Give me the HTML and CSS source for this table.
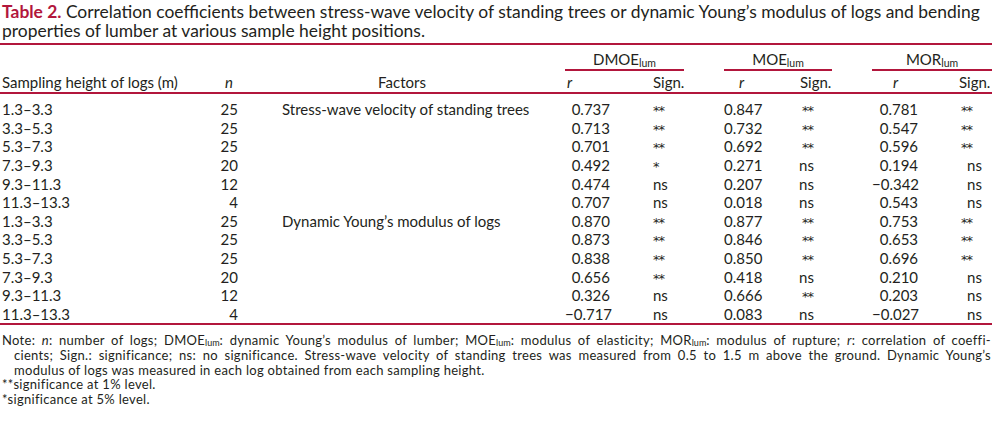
FILE: index.html
```html
<!DOCTYPE html>
<html lang="en">
<head>
<meta charset="utf-8">
<title>Table 2</title>
<link rel="stylesheet" href="styles.css">
</head>
<body>
<div class="page">
  <p class="caption"><span class="label">Table 2.</span> Correlation coefficients between stress-wave velocity of standing trees or dynamic Young’s modulus of logs and bending<br>properties of lumber at various sample height positions.</p>
  <table class="tbl">
    <colgroup>
      <col class="w-height"><col class="w-n"><col class="w-factor">
      <col class="w-r1"><col class="w-s1"><col class="w-gap">
      <col class="w-r2"><col class="w-s2"><col class="w-gap">
      <col class="w-r3"><col class="w-s3">
    </colgroup>
    <thead>
      <tr class="hrow1">
        <th></th><th></th><th></th>
        <th class="grp" colspan="2">DMOE<span class="sub">lum</span></th><th></th>
        <th class="grp" colspan="2">MOE<span class="sub">lum</span></th><th></th>
        <th class="grp" colspan="2">MOR<span class="sub">lum</span></th>
      </tr>
      <tr class="hrow2">
        <th class="c-height">Sampling height of logs (m)</th>
        <th class="c-n"><i>n</i></th>
        <th class="c-factor">Factors</th>
        <th class="hr1"><i>r</i></th><th class="hs1">Sign.</th><th></th>
        <th class="hr2"><i>r</i></th><th class="hs2">Sign.</th><th></th>
        <th class="hr3"><i>r</i></th><th class="hs3">Sign.</th>
      </tr>
    </thead>
    <tbody>
      <tr class="first"><td class="c-height">1.3–3.3</td><td class="c-n">25</td><td class="c-factor">Stress-wave velocity of standing trees</td><td class="r1">0.737</td><td class="s1 ast">**</td><td></td><td class="r2">0.847</td><td class="s2 ast">**</td><td></td><td class="r3">0.781</td><td class="s3 ast">**</td></tr>
      <tr><td class="c-height">3.3–5.3</td><td class="c-n">25</td><td class="c-factor"></td><td class="r1">0.713</td><td class="s1 ast">**</td><td></td><td class="r2">0.732</td><td class="s2 ast">**</td><td></td><td class="r3">0.547</td><td class="s3 ast">**</td></tr>
      <tr><td class="c-height">5.3–7.3</td><td class="c-n">25</td><td class="c-factor"></td><td class="r1">0.701</td><td class="s1 ast">**</td><td></td><td class="r2">0.692</td><td class="s2 ast">**</td><td></td><td class="r3">0.596</td><td class="s3 ast">**</td></tr>
      <tr><td class="c-height">7.3–9.3</td><td class="c-n">20</td><td class="c-factor"></td><td class="r1">0.492</td><td class="s1 ast">*</td><td></td><td class="r2">0.271</td><td class="s2 ns">ns</td><td></td><td class="r3">0.194</td><td class="s3 ns">ns</td></tr>
      <tr><td class="c-height">9.3–11.3</td><td class="c-n">12</td><td class="c-factor"></td><td class="r1">0.474</td><td class="s1 ns">ns</td><td></td><td class="r2">0.207</td><td class="s2 ns">ns</td><td></td><td class="r3">−0.342</td><td class="s3 ns">ns</td></tr>
      <tr><td class="c-height">11.3–13.3</td><td class="c-n">4</td><td class="c-factor"></td><td class="r1">0.707</td><td class="s1 ns">ns</td><td></td><td class="r2">0.018</td><td class="s2 ns">ns</td><td></td><td class="r3">0.543</td><td class="s3 ns">ns</td></tr>
      <tr><td class="c-height">1.3–3.3</td><td class="c-n">25</td><td class="c-factor">Dynamic Young’s modulus of logs</td><td class="r1">0.870</td><td class="s1 ast">**</td><td></td><td class="r2">0.877</td><td class="s2 ast">**</td><td></td><td class="r3">0.753</td><td class="s3 ast">**</td></tr>
      <tr><td class="c-height">3.3–5.3</td><td class="c-n">25</td><td class="c-factor"></td><td class="r1">0.873</td><td class="s1 ast">**</td><td></td><td class="r2">0.846</td><td class="s2 ast">**</td><td></td><td class="r3">0.653</td><td class="s3 ast">**</td></tr>
      <tr><td class="c-height">5.3–7.3</td><td class="c-n">25</td><td class="c-factor"></td><td class="r1">0.838</td><td class="s1 ast">**</td><td></td><td class="r2">0.850</td><td class="s2 ast">**</td><td></td><td class="r3">0.696</td><td class="s3 ast">**</td></tr>
      <tr><td class="c-height">7.3–9.3</td><td class="c-n">20</td><td class="c-factor"></td><td class="r1">0.656</td><td class="s1 ast">**</td><td></td><td class="r2">0.418</td><td class="s2 ns">ns</td><td></td><td class="r3">0.210</td><td class="s3 ns">ns</td></tr>
      <tr><td class="c-height">9.3–11.3</td><td class="c-n">12</td><td class="c-factor"></td><td class="r1">0.326</td><td class="s1 ns">ns</td><td></td><td class="r2">0.666</td><td class="s2 ast">**</td><td></td><td class="r3">0.203</td><td class="s3 ns">ns</td></tr>
      <tr><td class="c-height">11.3–13.3</td><td class="c-n">4</td><td class="c-factor"></td><td class="r1">−0.717</td><td class="s1 ns">ns</td><td></td><td class="r2">0.083</td><td class="s2 ns">ns</td><td></td><td class="r3">−0.027</td><td class="s3 ns">ns</td></tr>
    </tbody>
  </table>
  <div class="notes">
    <span class="line just">Note: <i>n</i>: number of logs; DMOE<span class="nsub">lum</span>: dynamic Young’s modulus of lumber; MOE<span class="nsub">lum</span>: modulus of elasticity; MOR<span class="nsub">lum</span>: modulus of rupture; <i>r</i>: correlation of coeffi-</span>
    <span class="line just indent">cients; Sign.: significance; ns: no significance. Stress-wave velocity of standing trees was measured from 0.5 to 1.5 m above the ground. Dynamic Young’s</span>
    <span class="line indent">modulus of logs was measured in each log obtained from each sampling height.</span>
    <span class="line">**significance at 1% level.</span>
    <span class="line">*significance at 5% level.</span>
  </div>
</div>
</body>
</html>
```
FILE: styles.css
```css
html, body {
  margin: 0;
  padding: 0;
  background: #ffffff;
}

body {
  font-family: Lato, "Open Sans", "Noto Sans", sans-serif;
  color: #231f20;
}

.page {
  width: 992px;
  overflow: hidden;
}

.caption {
  font-size: 17.45px;
  line-height: 19px;
  margin: 0 0 3px 0;
  padding: 2px 0 0 2px;
  white-space: nowrap;
}

.label {
  color: #b2163c;
  font-weight: 700;
}

.tbl {
  width: 992px;
  table-layout: fixed;
  border-collapse: separate;
  border-spacing: 0;
  border-top: 2px solid #b2163c;
  border-bottom: 2px solid #b2163c;
  font-size: 15px;
  line-height: 18.6px;
}

.w-height { width: 200px; }
.w-n { width: 40px; }
.w-factor { width: 325px; }
.w-r1 { width: 75px; }
.w-s1 { width: 44px; }
.w-gap { width: 40px; }
.w-r2 { width: 66px; }
.w-s2 { width: 42px; }
.w-r3 { width: 78px; }
.w-s3 { width: 42px; }

th, td {
  padding: 0;
  font-weight: 400;
  white-space: nowrap;
  vertical-align: baseline;
}

.sub {
  font-size: 10.5px;
  line-height: 0;
  vertical-align: -2px;
}

.hrow1 th {
  padding-top: 5px;
}

.hrow1 .grp {
  text-align: center;
  border-bottom: 2px solid #b2163c;
}

.hrow2 th {
  padding-top: 2px;
  padding-bottom: 1px;
  border-bottom: 2px solid #b2163c;
  text-align: left;
}

.c-height {
  padding-left: 2px;
  text-align: left;
}

.hrow2 .c-n {
  text-align: right;
  padding-right: 7px;
}

td.c-n {
  text-align: right;
  padding-right: 2px;
}

.c-factor {
  padding-left: 42px;
  padding-right: 43px;
  text-align: left;
}

.hrow2 .c-factor {
  text-align: center;
}

.hrow2 .hr1 { padding-left: 2px; }
.hrow2 .hr2 { padding-left: 15px; }
.hrow2 .hr3 { padding-left: 21px; }
.hrow2 .hs1 { padding-left: 13px; }
.hrow2 .hs2 { padding-left: 10px; }
.hrow2 .hs3 { padding-left: 9px; }

td.r1 { text-align: right; padding-right: 30px; }
td.r2 { text-align: right; padding-right: 32px; }
td.r3 { text-align: right; padding-right: 32px; }

td.s1 { padding-left: 13px; }
td.s2 { padding-left: 12px; }
td.s2.ns { padding-left: 9px; }
td.s3 { padding-left: 11px; }
td.s3.ns { padding-left: 17px; }

td.ast {
  font-family: "DejaVu Sans", sans-serif;
  font-size: 13px;
  line-height: 15px;
  letter-spacing: -1px;
  vertical-align: 2px;
}

tbody tr.first td {
  padding-top: 6px;
}

.notes {
  margin-top: 8px;
  font-size: 13px;
  line-height: 14.7px;
  letter-spacing: 0.3px;
}

.line {
  display: block;
  padding-left: 2px;
  padding-right: 1px;
  white-space: nowrap;
}

.line.just {
  text-align: justify;
  text-align-last: justify;
}

.line.indent {
  padding-left: 14px;
}

.nsub {
  font-size: 9px;
  line-height: 0;
  letter-spacing: 0;
  vertical-align: -0.5px;
}
```
